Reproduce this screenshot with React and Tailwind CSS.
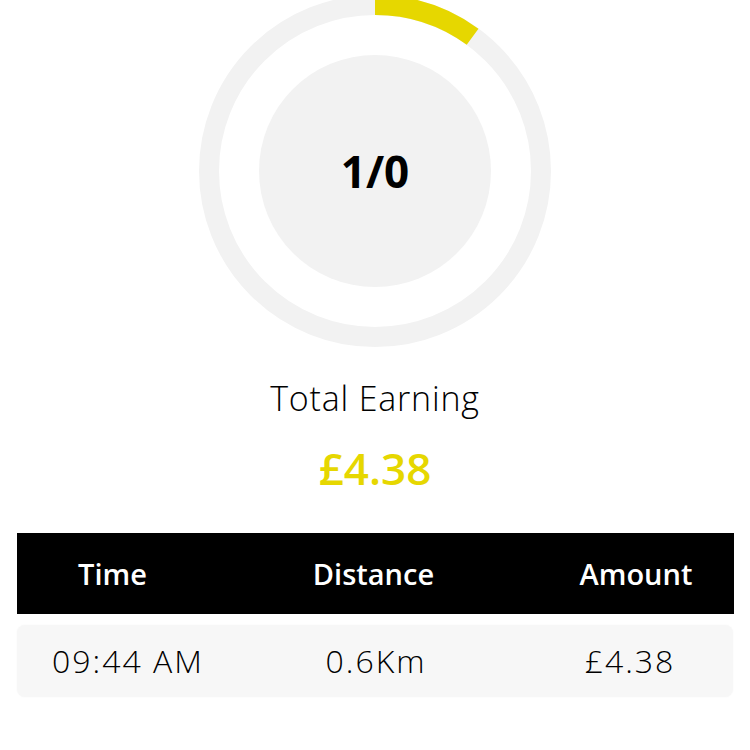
import React from "react";

function Ring() {
  const r = 166;
  const c = 2 * Math.PI * r;
  const arc = c * 0.1;
  return (
    <div className="relative w-[352px] h-[352px] -mt-[5px]">
      <svg width="352" height="352" viewBox="0 0 352 352" className="block">
        <circle cx="176" cy="176" r={r} fill="none" stroke="#f2f2f2" strokeWidth="20" />
        <circle
          cx="176"
          cy="176"
          r={r}
          fill="none"
          stroke="#e6d700"
          strokeWidth="20"
          strokeDasharray={`${arc} ${c}`}
          transform="rotate(-90 176 176)"
        />
        <circle cx="176" cy="176" r="116" fill="#f2f2f2" />
      </svg>
      <div className="absolute inset-0 flex items-center justify-center">
        <span className="text-[44px] leading-none font-bold text-black">1/0</span>
      </div>
    </div>
  );
}

export default function App() {
  return (
    <div
      className="w-[750px] h-[750px] bg-white overflow-hidden flex flex-col items-center"
      style={{ fontFamily: '"Open Sans", "Noto Sans", sans-serif' }}
    >
      <Ring />
      <div className="mt-[34px] text-[34px] leading-none font-light tracking-[0.8px] text-black">Total Earning</div>
      <div className="mt-[31px] text-[44px] leading-none font-semibold text-[#e6d700]">£4.38</div>
      <div className="mt-[43px] w-[717px] h-[81px] bg-black flex items-center text-white text-[29px] font-semibold">
        <div className="w-[192px] text-center">Time</div>
        <div className="w-[330px] text-center">Distance</div>
        <div className="flex-1 text-center">Amount</div>
      </div>
      <div className="mt-[11px] w-[716px] h-[72px] bg-[#f7f7f7] rounded-[8px] shadow-[0_0_2px_rgba(0,0,0,0.04)] flex items-center text-black text-[32px] font-light tracking-[2px]">
        <div className="w-[222px] text-center">09:44 AM</div>
        <div className="w-[274px] text-center">0.6Km</div>
        <div className="flex-1 text-center pl-[14px]">£4.38</div>
      </div>
    </div>
  );
}
